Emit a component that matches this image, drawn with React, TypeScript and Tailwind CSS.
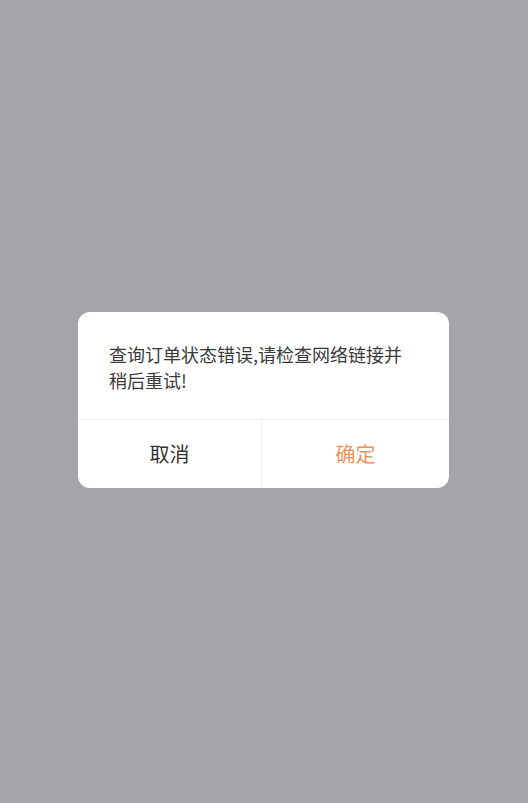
import React from 'react';

const font = { fontFamily: '"Noto Sans CJK SC", "Noto Sans", sans-serif' };

export default function App() {
  return (
    <div className="w-full h-[803px] bg-[#a4a4a9] pt-[312px] pl-[78px]" style={font}>
      <div className="w-[371px] bg-white rounded-[12px] overflow-hidden">
        <div className="pt-[29px] pb-[26px] pl-[31px] pr-[32px] text-[18px] leading-[26px] text-[#3a3a3a]">
          查询订单状态错误,请检查网络链接并稍后重试!
        </div>
        <div className="flex border-t border-[#efefef] h-[69px]">
          <button className="w-[184px] text-[20px] text-[#333333] border-r border-[#efefef]">取消</button>
          <button className="flex-1 text-[20px] text-[#eb915a]">确定</button>
        </div>
      </div>
    </div>
  );
}
